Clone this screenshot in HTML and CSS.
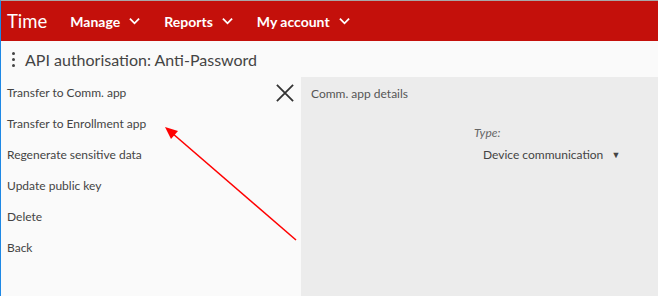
FILE: index.html
```html
<!DOCTYPE html>
<html lang="en">
<head>
  <meta charset="UTF-8">
  <title>API authorisation: Anti-Password - Time</title>
  <link rel="stylesheet" href="styles.css">
</head>
<body>
  <div class="page">
    <header class="topbar">
      <div class="brand">Time</div>
      <nav class="nav">
        <a class="nav-item">Manage <svg class="chev" viewBox="0 0 12 8"><path d="M1 1.5l5 5 5-5"/></svg></a>
        <a class="nav-item">Reports <svg class="chev" viewBox="0 0 12 8"><path d="M1 1.5l5 5 5-5"/></svg></a>
        <a class="nav-item">My account <svg class="chev" viewBox="0 0 12 8"><path d="M1 1.5l5 5 5-5"/></svg></a>
      </nav>
    </header>

    <div class="titlebar">
      <span class="kebab"><i></i><i></i><i></i></span>
      <h1>API authorisation: Anti-Password</h1>
    </div>

    <div class="main">
      <aside class="actions">
        <ul class="action-list">
          <li>Transfer to Comm. app</li>
          <li>Transfer to Enrollment app</li>
          <li>Regenerate sensitive data</li>
          <li>Update public key</li>
          <li>Delete</li>
          <li>Back</li>
        </ul>
        <svg class="close" viewBox="0 0 20 20"><path d="M1 1l18 18M19 1L1 19"/></svg>
      </aside>

      <section class="details">
        <div class="details-title">Comm. app details</div>
        <div class="field">
          <label>Type:</label>
          <div class="select">Device communication <span class="caret">&#9660;</span></div>
        </div>
      </section>
    </div>

    <!-- annotation arrow -->
    <svg class="annot" viewBox="0 0 658 296" width="658" height="296">
      <line x1="296" y1="240" x2="172" y2="133" stroke="#ff0000" stroke-width="1.6"/>
      <polygon points="165,127 178,131 171,139" fill="#ff0000"/>
    </svg>
  </div>
</body>
</html>
```

FILE: styles.css
```css
* {
  box-sizing: border-box;
}

body {
  margin: 0;
  font-family: Lato, 'Open Sans', sans-serif;
  color: #444;
  background: #fafafa;
}

.page {
  position: relative;
  width: 658px;
  height: 296px;
  overflow: hidden;
  border-left: 1px solid #1e88e5;
  border-top: 1px solid #a8a8a8;
  display: flex;
  flex-direction: column;
}

.topbar {
  height: 40px;
  background: #c4100b;
  color: #fff;
  display: flex;
  align-items: center;
  padding-left: 6px;
  flex-shrink: 0;
}

.brand {
  font-size: 18.5px;
  margin-right: 23px;
}

.nav {
  display: flex;
  gap: 24px;
}

.nav-item {
  font-size: 14px;
  font-weight: 700;
  display: flex;
  align-items: center;
  gap: 9px;
}

.chev {
  width: 11px;
  height: 8px;
  fill: none;
  stroke: #fff;
  stroke-width: 2;
}

.titlebar {
  height: 36px;
  display: flex;
  align-items: center;
  padding-left: 11px;
  flex-shrink: 0;
}

.kebab {
  display: flex;
  flex-direction: column;
  gap: 3px;
  margin-right: 10px;
}

.kebab i {
  width: 3px;
  height: 3px;
  border-radius: 50%;
  background: #444;
}

.titlebar h1 {
  margin: 0;
  font-size: 16px;
  font-weight: 400;
  color: #444;
}

.main {
  flex: 1;
  display: flex;
}

.actions {
  width: 300px;
  display: flex;
  justify-content: space-between;
  padding: 0 7px 0 6px;
}

.action-list {
  list-style: none;
  margin: 0;
  padding: 0;
  font-size: 12px;
}

.action-list li {
  height: 31px;
  line-height: 31px;
}

.close {
  width: 18px;
  height: 18px;
  margin-top: 7px;
  fill: none;
  stroke: #333;
  stroke-width: 2;
}

.details {
  flex: 1;
  background: #ececec;
  padding: 9px 10px;
  font-size: 12px;
  color: #555;
}

.details-title {
  line-height: 15px;
}

.field {
  margin-left: 163px;
  margin-top: 24px;
}

.field label {
  display: block;
  font-style: italic;
  color: #666;
}

.select {
  margin-top: 7px;
  margin-left: 9px;
  color: #444;
}

.caret {
  font-size: 9px;
  margin-left: 5px;
  vertical-align: 1px;
}

.annot {
  position: absolute;
  left: -1px;
  top: -1px;
  pointer-events: none;
}
```
